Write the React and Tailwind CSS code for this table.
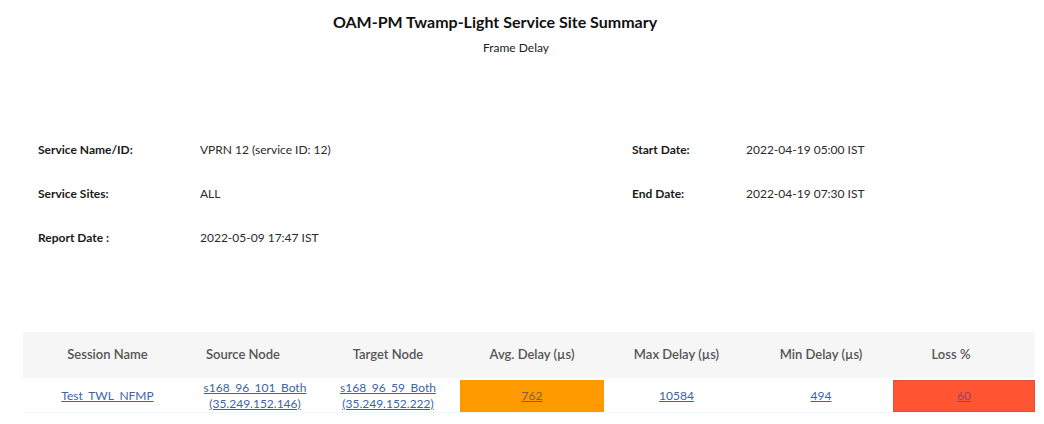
import React from 'react';

const font = { fontFamily: 'Lato, "Noto Sans", sans-serif' };

function InfoRow({ label, value }) {
  return (
    <>
      <div className="font-bold text-[12px] leading-4 text-[#1a1a1a]">{label}</div>
      <div className="text-[12px] leading-4 text-[#2a2a2a]">{value}</div>
    </>
  );
}

function App() {
  const headers = [
    { name: 'Session Name', cls: 'pl-5' },
    { name: 'Source Node', cls: 'pr-[2px]' },
    { name: 'Target Node', cls: '' },
    { name: 'Avg. Delay (µs)', cls: '' },
    { name: 'Max Delay (µs)', cls: '' },
    { name: 'Min Delay (µs)', cls: '' },
    { name: 'Loss %', cls: 'pr-[26px]' },
  ];

  return (
    <div className="w-[1044px] h-[424px] bg-white overflow-hidden" style={font}>
      {/* Title */}
      <div className="pt-[12px] flex flex-col items-center">
        <h1 className="text-[16px] leading-5 font-bold text-[#111] pr-[54px]">
          OAM-PM Twamp-Light Service Site Summary
        </h1>
        <p className="mt-2 text-[12px] leading-4 text-[#222] pr-[12px]">Frame Delay</p>
      </div>

      {/* Report info */}
      <div className="mt-[86px] pl-[38px] grid grid-cols-[162px_432px_114px_1fr] gap-y-[28px]">
        <InfoRow label="Service Name/ID:" value="VPRN 12 (service ID: 12)" />
        <InfoRow label="Start Date:" value="2022-04-19 05:00 IST" />
        <InfoRow label="Service Sites:" value="ALL" />
        <InfoRow label="End Date:" value="2022-04-19 07:30 IST" />
        <InfoRow label="Report Date :" value="2022-05-09 17:47 IST" />
      </div>

      {/* Table */}
      <div className="mt-[86px] ml-[23px] w-[1012px]">
        <div className="grid grid-cols-[149px_144px_144px_144px_145px_144px_142px] h-[46px] items-center bg-[#f6f6f7]">
          {headers.map((h) => (
            <div
              key={h.name}
              className={`text-center text-[13px] font-semibold text-[#555] ${h.cls}`}
            >
              {h.name}
            </div>
          ))}
        </div>
        <div className="grid grid-cols-[149px_144px_144px_144px_145px_144px_142px] h-[35px] items-stretch py-[2px] border-b border-[#eef8fb] text-[12px] leading-4">
          <div className="flex items-center justify-center pl-5">
            <a href="#" className="underline text-[#3b64a4]">Test_TWL_NFMP</a>
          </div>
          <div className="flex items-center justify-center pl-[22px] text-center">
            <a href="#" className="underline text-[#3b64a4]">
              s168_96_101_Both
              <br />
              (35.249.152.146)
            </a>
          </div>
          <div className="flex items-center justify-center text-center">
            <a href="#" className="underline text-[#3b64a4]">
              s168_96_59_Both
              <br />
              (35.249.152.222)
            </a>
          </div>
          <div className="flex items-center justify-center bg-[#ff9900]">
            <a href="#" className="underline text-[#7d5f4c]">762</a>
          </div>
          <div className="flex items-center justify-center">
            <a href="#" className="underline text-[#3b64a4]">10584</a>
          </div>
          <div className="flex items-center justify-center">
            <a href="#" className="underline text-[#3b64a4]">494</a>
          </div>
          <div className="flex items-center justify-center bg-[#ff5533] border border-[#e0503a]">
            <a href="#" className="underline text-[#9a3f63]">60</a>
          </div>
        </div>
      </div>
    </div>
  );
}

export default App;
